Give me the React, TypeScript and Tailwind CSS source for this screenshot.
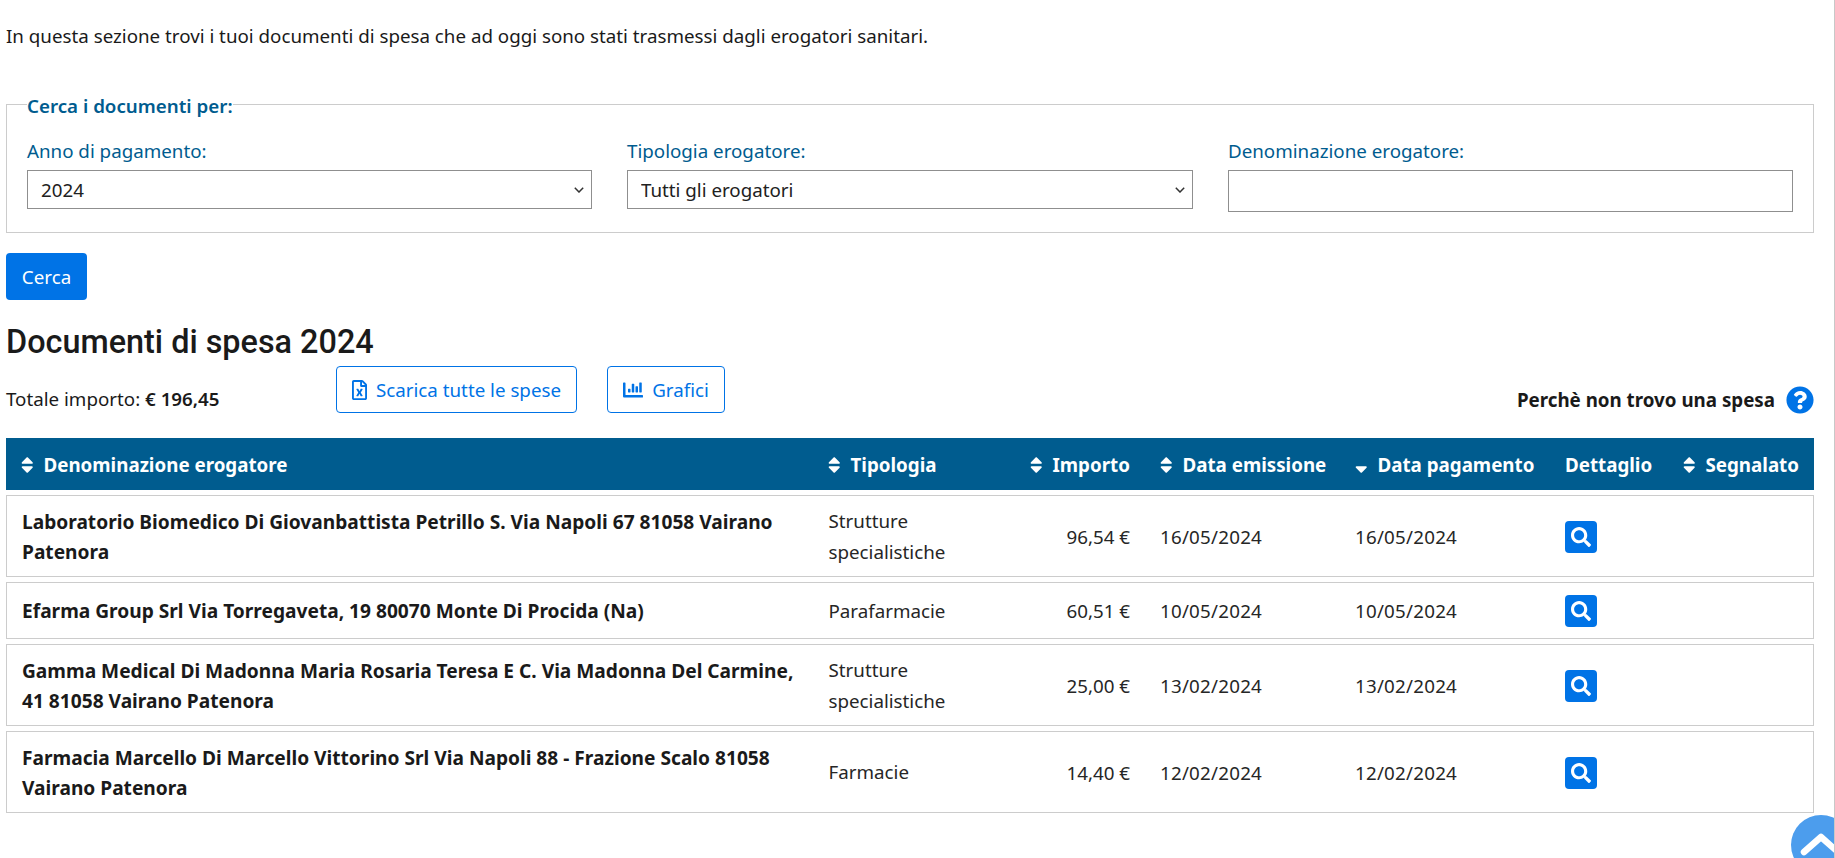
import { FaRegFileExcel, FaChartBar, FaSort, FaSortDown, FaSearch, FaQuestionCircle } from 'react-icons/fa';

const rows = [
  {
    name: 'Laboratorio Biomedico Di Giovanbattista Petrillo S. Via Napoli 67 81058 Vairano Patenora',
    tipo: 'Strutture specialistiche',
    importo: '96,54 €',
    emissione: '16/05/2024',
    pagamento: '16/05/2024',
  },
  {
    name: 'Efarma Group Srl Via Torregaveta, 19 80070 Monte Di Procida (Na)',
    tipo: 'Parafarmacie',
    importo: '60,51 €',
    emissione: '10/05/2024',
    pagamento: '10/05/2024',
  },
  {
    name: 'Gamma Medical Di Madonna Maria Rosaria Teresa E C. Via Madonna Del Carmine, 41 81058 Vairano Patenora',
    tipo: 'Strutture specialistiche',
    importo: '25,00 €',
    emissione: '13/02/2024',
    pagamento: '13/02/2024',
  },
  {
    name: 'Farmacia Marcello Di Marcello Vittorino Srl Via Napoli 88 - Frazione Scalo 81058 Vairano Patenora',
    tipo: 'Farmacie',
    importo: '14,40 €',
    emissione: '12/02/2024',
    pagamento: '12/02/2024',
  },
];

function SortHead({ label, down }: { label: string; down?: boolean }) {
  return (
    <span className="flex items-center gap-[10px]">
      {down ? <FaSortDown className="h-[20px] w-[12.5px]" /> : <FaSort className="h-[20px] w-[12.5px]" />}
      {label}
    </span>
  );
}

function Select({ value }: { value: string }) {
  return (
    <div className="relative">
      <select className="block h-[39px] w-full appearance-none border border-[#8f8f8f] bg-white pl-[13px] text-[#212121]">
        <option>{value}</option>
      </select>
      <svg viewBox="0 0 10 6" className="absolute right-[8px] top-[17px] h-[6px] w-[10px]" fill="none" stroke="#333" strokeWidth="1.5">
        <path d="M.8.8 5 5l4.2-4.2" />
      </svg>
    </div>
  );
}

export default function App() {
  return (
    <div className="relative h-[858px] overflow-hidden border-r border-[#c8c8c8] bg-white pl-[6px] pr-[20px] text-[18.75px] leading-[30px] text-[#1a1a1a] [font-family:'Noto_Sans',sans-serif]">
      <p className="pt-[21px]">In questa sezione trovi i tuoi documenti di spesa che ad oggi sono stati trasmessi dagli erogatori sanitari.</p>

      {/* filtri */}
      <div className="relative mt-[53px] h-[129px] border border-[#cccccc] px-[20px] pt-[31px]">
        <span className="absolute left-[20px] top-[-14px] bg-white font-semibold text-[#005c8f]">Cerca i documenti per:</span>
        <div className="grid grid-cols-[565px_566px_565px] gap-x-[35px]">
          <div>
            <label className="block h-[34px] text-[#005c8f]">Anno di pagamento:</label>
            <Select value="2024" />
          </div>
          <div>
            <label className="block h-[34px] text-[#005c8f]">Tipologia erogatore:</label>
            <Select value="Tutti gli erogatori" />
          </div>
          <div>
            <label className="block h-[34px] text-[#005c8f]">Denominazione erogatore:</label>
            <input className="block h-[42px] w-full border border-[#8f8f8f] bg-white" />
          </div>
        </div>
      </div>

      <button className="mt-[20px] h-[47px] w-[81px] rounded-[4px] bg-[#0073e6] text-white">Cerca</button>

      <h2 className="mt-[18px] text-[32.4px] font-medium leading-[48px] text-[#1a1a1a] [font-family:Roboto,sans-serif]">Documenti di spesa 2024</h2>

      {/* riepilogo e azioni */}
      <div className="flex h-[72px] items-start">
        <span className="mt-[18px] w-[330px]">Totale importo: <b className="font-semibold">€ 196,45</b></span>
        <button className="flex h-[47px] w-[241px] items-center justify-center gap-[9px] rounded-[4px] border border-[#0073e6] text-[#0073e6]">
          <FaRegFileExcel className="h-[20px] w-[15px]" />
          Scarica tutte le spese
        </button>
        <button className="ml-[30px] flex h-[47px] w-[118px] items-center justify-center gap-[9px] rounded-[4px] border border-[#0073e6] text-[#0073e6]">
          <FaChartBar className="h-[20px] w-[20px]" />
          Grafici
        </button>
        <div className="ml-auto mt-[18px] flex items-center gap-[11px] font-bold">
          <span className="pt-[1px]">Perchè non trovo una spesa</span>
          <FaQuestionCircle className="h-[28px] w-[28px] text-[#0073e6]" />
        </div>
      </div>

      {/* tabella */}
      <div className="grid h-[52px] grid-cols-[807px_202px_130px_195px_210px_118px_1fr] items-center bg-[#005c8f] pl-[15px] pt-[2px] font-bold text-white">
        <SortHead label="Denominazione erogatore" />
        <SortHead label="Tipologia" />
        <div className="pr-[30px]"><SortHead label="Importo" /></div>
        <SortHead label="Data emissione" />
        <SortHead label="Data pagamento" down />
        <span>Dettaglio</span>
        <SortHead label="Segnalato" />
      </div>

      <div className="mt-[5px] flex flex-col gap-[5px]">
        {rows.map((r) => (
          <div key={r.name} className="grid grid-cols-[806px_202px_130px_195px_210px_118px_1fr] items-center border border-[#cccccc] pl-[15px] text-[#262626]">
            <div className="pb-[8.5px] pr-[16px] pt-[10.5px] text-[19.15px] font-bold leading-[30.5px] text-[#1a1a1a]">{r.name}</div>
            <div className="pl-[0.5px] pr-[60px] pt-[1px] leading-[30.5px]">{r.tipo}</div>
            <div className="pr-[30px] pt-[1px] text-right">{r.importo}</div>
            <div className="pt-[1px] tracking-[0.23px]">{r.emissione}</div>
            <div className="pt-[1px] tracking-[0.23px]">{r.pagamento}</div>
            <div>
              <button className="mb-[11px] mt-[12px] flex h-[32px] w-[32px] items-center justify-center rounded-[4px] bg-[#0073e6] text-white">
                <FaSearch className="h-[20px] w-[20px]" />
              </button>
            </div>
            <div />
          </div>
        ))}
      </div>

      {/* torna su */}
      <button className="absolute left-[1791px] top-[815px] flex h-[60px] w-[60px] items-start justify-center rounded-full bg-[#0073e6]/70 pt-[17px]">
        <svg viewBox="0 0 48 30" className="h-[30px] w-[48px] shrink-0" fill="none" stroke="#fff" strokeWidth="6.5" strokeLinecap="round" strokeLinejoin="round">
          <path d="M7 20 24 5l17 15" />
        </svg>
      </button>
    </div>
  );
}
